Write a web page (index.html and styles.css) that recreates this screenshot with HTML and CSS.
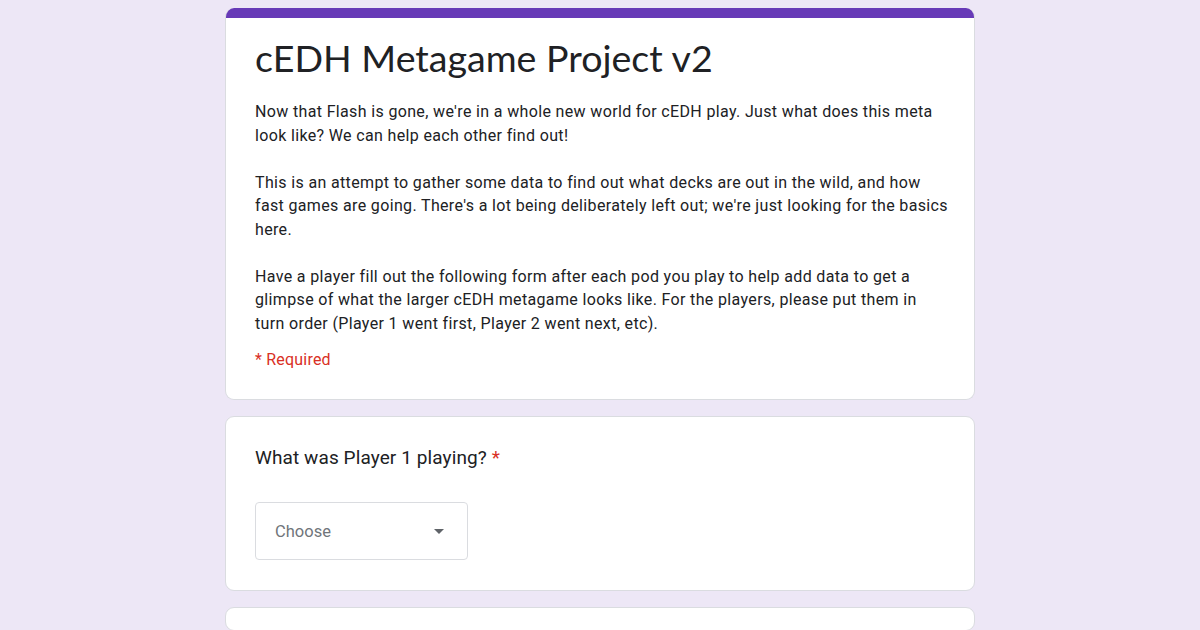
FILE: index.html
```html
<!DOCTYPE html>
<html>
<head>
<meta charset="utf-8">
<link rel="stylesheet" href="styles.css">
</head>
<body>
<div class="page">
  <div class="card header-card">
    <div class="accent"></div>
    <div class="header-body">
      <h1 class="title">cEDH Metagame Project v2</h1>
      <div class="desc">
        <p>Now that Flash is gone, we're in a whole new world for cEDH play. Just what does this meta look like? We can help each other find out!</p>
        <p>This is an attempt to gather some data to find out what decks are out in the wild, and how fast games are going. There's a lot being deliberately left out; we're just looking for the basics here.</p>
        <p>Have a player fill out the following form after each pod you play to help add data to get a glimpse of what the larger cEDH metagame looks like. For the players, please put them in turn order (Player 1 went first, Player 2 went next, etc).</p>
      </div>
      <div class="required">* Required</div>
    </div>
  </div>
  <div class="card question-card">
    <div class="question">What was Player 1 playing? <span class="star">*</span></div>
    <div class="select">
      <span class="choose">Choose</span>
      <svg class="arrow" width="10" height="5" viewBox="0 0 10 5"><path d="M0 0 L10 0 L5 5 Z" fill="#5f6368"/></svg>
    </div>
  </div>
  <div class="card last-card"></div>
</div>
</body>
</html>
```
FILE: styles.css
```css
html, body {
  margin: 0;
  padding: 0;
  background: #ede7f6;
  height: 100%;
  overflow: hidden;
}
body {
  font-family: Roboto, "Liberation Sans", sans-serif;
  color: #202124;
}
.page {
  width: 750px;
  margin: 0 auto;
  padding-top: 8px;
  display: flex;
  flex-direction: column;
  gap: 16px;
}
.card {
  background: #fff;
  border: 1px solid #dadce0;
  border-radius: 9px;
  box-sizing: border-box;
  overflow: hidden;
  flex-shrink: 0;
}
.header-card {
  border-top: none;
}
.accent {
  height: 10px;
  background: #673ab7;
  margin: 0 -1px;
}
.header-body {
  padding: 12px 24px 28px 29px;
}
.title {
  margin: 0;
  font-family: Lato, "Open Sans", sans-serif;
  font-weight: 400;
  font-size: 37.6px;
  line-height: 56px;
  color: #202124;
  letter-spacing: 0;
}
.desc {
  margin-top: 14px;
  font-size: 16px;
  line-height: 23.5px;
  letter-spacing: 0.35px;
  color: #202124;
}
.desc p {
  margin: 0 0 23.5px 0;
}
.desc p:last-child {
  margin-bottom: 0;
}
.required {
  margin-top: 13px;
  font-size: 16px;
  line-height: 23px;
  letter-spacing: 0.2px;
  color: #d93025;
}
.question-card {
  padding: 27px 28px 31px 29px;
  height: 175px;
}
.last-card {
  height: 24px;
}
.question {
  font-size: 19px;
  line-height: 28px;
  letter-spacing: 0.1px;
  color: #202124;
}
.star {
  color: #d93025;
}
.select {
  margin-top: 30px;
  width: 213px;
  height: 58px;
  border: 1px solid #dadce0;
  border-radius: 4px;
  box-sizing: border-box;
  display: flex;
  align-items: center;
  justify-content: space-between;
  padding: 0 23px 0 19px;
}
.choose {
  font-size: 16.5px;
  color: #70757a;
}
.arrow {
  display: block;
}
```
